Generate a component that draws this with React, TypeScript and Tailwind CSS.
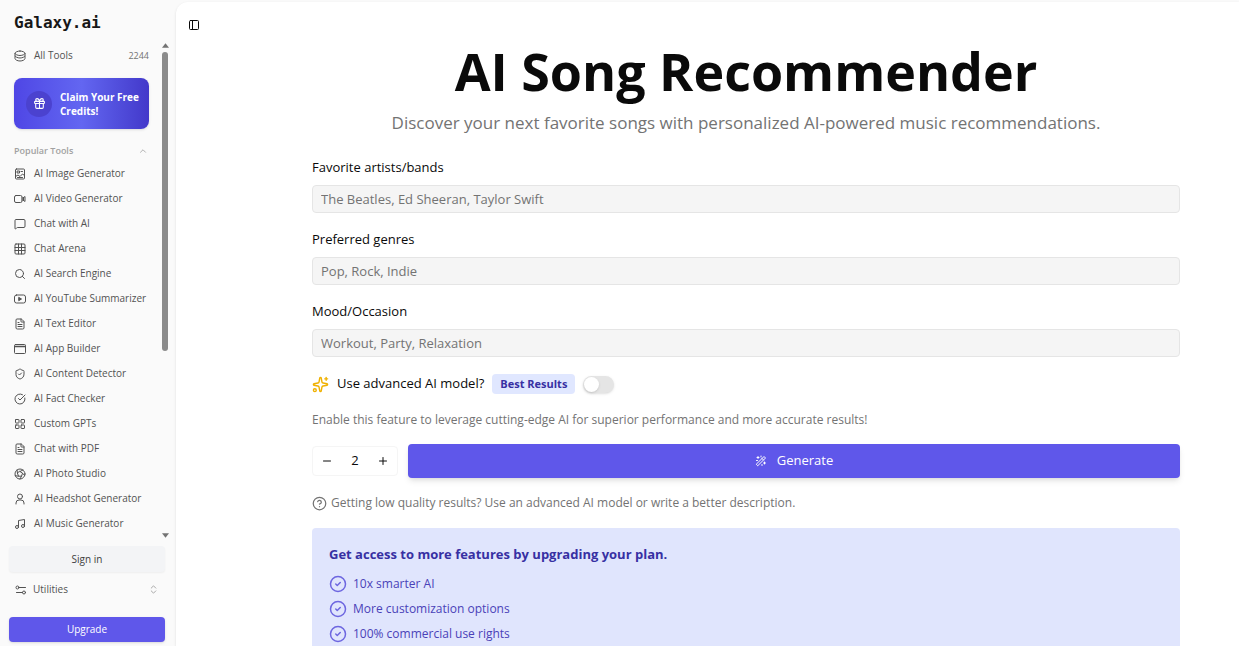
import { useState, type ReactNode } from "react";
import {
  ChevronsUpDown,
  ChevronUp,
  CircleCheckBig,
  CircleHelp,
  FileText,
  Gift,
  LayoutGrid,
  MessageSquare,
  Minus,
  Music,
  PanelLeft,
  Plus,
  Search,
  ShieldCheck,
  Sparkles,
  type LucideIcon,
} from "lucide-react";

function Svg({ size = 12, className, children }: { size?: number; className?: string; children: ReactNode }) {
  return (
    <svg
      width={size}
      height={size}
      viewBox="0 0 24 24"
      fill="none"
      stroke="currentColor"
      strokeWidth={2}
      strokeLinecap="round"
      strokeLinejoin="round"
      className={className}
      aria-hidden="true"
    >
      {children}
    </svg>
  );
}

function StackIcon() {
  return (
    <Svg>
      <path d="M12 2c5 0 10 2.500 10 4.500S17 11 12 11 2 8.500 2 6.500 7 2 12 2z" />
      <path d="M2 7v4c0 2.500 5 5 10 5s10-2.500 10-5V7" />
      <path d="M2 12v5c0 2.500 5 5 10 5s10-2.500 10-5v-5" />
    </Svg>
  );
}

function ImageIcon() {
  return (
    <Svg>
      <rect x="3" y="2" width="18" height="20" rx="2" />
      <rect x="7" y="6" width="4" height="4" />
      <path d="M14 7h3M3 17l5-3 4 3 5-5 4 3M7 19h10" />
    </Svg>
  );
}

function VideoIcon() {
  return (
    <Svg>
      <rect x="1" y="5" width="15" height="14" rx="3" />
      <path d="M16 10h2l4-3v10l-4-3h-2M19 9v6" />
    </Svg>
  );
}

function GridIcon() {
  return (
    <Svg>
      <rect x="2" y="2" width="20" height="20" rx="2" />
      <path d="M2 9h20M2 15h20M9 2v20M15 2v20" />
    </Svg>
  );
}

function PlayIcon() {
  return (
    <Svg>
      <rect x="1" y="4" width="22" height="16" rx="4" />
      <path d="m10 9 5 3-5 3z" fill="currentColor" />
    </Svg>
  );
}

function WindowIcon() {
  return (
    <Svg>
      <rect x="1" y="3" width="22" height="18" rx="2" />
      <path d="M1 7h22" strokeWidth={3} />
    </Svg>
  );
}

function ApertureIcon() {
  return (
    <Svg>
      <circle cx="12" cy="12" r="10" />
      <path d="m12 7 5 3.600-2 5.800H9l-2-5.800zM12 7l6-3M17 10.600l4.500 4.400M15 16.400 12 22M9 16.400l-6.500-1M7 10.600 6 4" />
    </Svg>
  );
}

function PersonIcon() {
  return (
    <Svg>
      <circle cx="12" cy="7" r="5" />
      <path d="M4 22v-2a6 6 0 0 1 6-6h4a6 6 0 0 1 6 6v2" />
    </Svg>
  );
}

function SlidersIcon() {
  return (
    <Svg>
      <circle cx="5" cy="7" r="3" />
      <path d="M8 7h13M3 17h12" />
      <circle cx="18" cy="17" r="3" />
    </Svg>
  );
}

function WandIcon() {
  return (
    <Svg>
      <path d="m3 18 15-15 3 3L6 21zM14 7l3 3M6 3v4M4 5h4M12 2v2M19 14v4M17 16h4M3 11h2M14 19v2" />
    </Svg>
  );
}

function CheckIcon() {
  return (
    <Svg size={18} className="text-[#6d66e0]">
      <circle cx="12" cy="12" r="10" />
      <path d="m9 12 2 2 4-4" />
    </Svg>
  );
}

const TOOLS: { label: string; icon: LucideIcon | (() => ReactNode) }[] = [
  { label: "AI Image Generator", icon: ImageIcon },
  { label: "AI Video Generator", icon: VideoIcon },
  { label: "Chat with AI", icon: MessageSquare },
  { label: "Chat Arena", icon: GridIcon },
  { label: "AI Search Engine", icon: Search },
  { label: "AI YouTube Summarizer", icon: PlayIcon },
  { label: "AI Text Editor", icon: FileText },
  { label: "AI App Builder", icon: WindowIcon },
  { label: "AI Content Detector", icon: ShieldCheck },
  { label: "AI Fact Checker", icon: CircleCheckBig },
  { label: "Custom GPTs", icon: LayoutGrid },
  { label: "Chat with PDF", icon: FileText },
  { label: "AI Photo Studio", icon: ApertureIcon },
  { label: "AI Headshot Generator", icon: PersonIcon },
  { label: "AI Music Generator", icon: Music },
];

const FIELDS = [
  { id: "artists", label: "Favorite artists/bands", placeholder: "The Beatles, Ed Sheeran, Taylor Swift" },
  { id: "genres", label: "Preferred genres", placeholder: "Pop, Rock, Indie" },
  { id: "mood", label: "Mood/Occasion", placeholder: "Workout, Party, Relaxation" },
];

const PERKS = ["10x smarter AI", "More customization options", "100% commercial use rights"];

function ScrollTrack() {
  return (
    <div className="flex w-2 flex-col items-center justify-between" aria-hidden="true">
      <div className="flex w-full flex-1 flex-col items-center gap-1">
        <svg width="7" height="5" viewBox="0 0 8 5" className="fill-neutral-500">
          <path d="M4 0 8 5H0z" />
        </svg>
        <div className="h-[61%] w-1.5 rounded-full bg-[#8b8b8b]" />
      </div>
      <svg width="7" height="5" viewBox="0 0 8 5" className="fill-neutral-500">
        <path d="M0 0h8L4 5z" />
      </svg>
    </div>
  );
}

function Sidebar() {
  return (
    <aside className="flex w-44 shrink-0 flex-col text-[10px] text-neutral-600">
      <a href="#" className="px-3.5 pt-[13px] font-['DejaVu_Sans_Mono',monospace] text-base leading-5 font-bold text-neutral-900">
        Galaxy.ai
      </a>
      <div className="mt-2.5 flex min-h-0 flex-1 pr-[7px]">
        <nav className="min-w-0 flex-1 overflow-hidden pl-3.5">
          <a href="#all" className="mr-3 flex h-[25px] items-center gap-2">
            <StackIcon />
            All Tools
            <span className="ml-auto text-[9px] text-neutral-500">2244</span>
          </a>
          <button className="mt-2.5 mr-3 flex h-[51px] w-[135px] items-center gap-2 rounded-lg bg-linear-to-r from-[#4f46e5] via-[#6366f1] to-[#4338ca] px-3 text-left text-[10px] leading-3.5 font-bold text-white shadow">
            <span className="flex size-[26px] shrink-0 items-center justify-center rounded-full bg-[#4b42cf]">
              <Gift size={13} />
            </span>
            <span className="whitespace-nowrap">
              Claim Your Free
              <br />
              Credits!
            </span>
          </button>
          <button className="mt-3.5 mr-3 flex h-4 w-[134px] items-center justify-between text-[9px] font-semibold text-neutral-400">
            Popular Tools
            <ChevronUp size={10} />
          </button>
          <ul className="mt-0.5">
            {TOOLS.map(({ label, icon: Icon }) => (
              <li key={label}>
                <a href="#tool" className="flex h-[25px] items-center gap-2 whitespace-nowrap">
                  <Icon size={12} />
                  {label}
                </a>
              </li>
            ))}
          </ul>
        </nav>
        <ScrollTrack />
      </div>
      <div className="flex flex-col pt-2 pr-[11px] pb-1 pl-[9px]">
        <button className="h-[26px] rounded bg-gray-100 text-neutral-700 shadow-xs">Sign in</button>
        <button className="mt-1 flex h-[27px] items-center gap-1.5 px-1.5">
          <SlidersIcon />
          Utilities
          <ChevronsUpDown size={11} className="ml-auto text-neutral-400" />
        </button>
        <button className="mt-3.5 h-[25px] rounded bg-[#5f57ea] text-white shadow">Upgrade</button>
      </div>
    </aside>
  );
}

export default function App() {
  const [count, setCount] = useState(2);

  return (
    <div className="flex h-screen overflow-hidden bg-neutral-50 font-['Open_Sans',sans-serif]">
      <Sidebar />
      <main className="mt-0.5 min-w-0 flex-1 overflow-hidden rounded-tl-xl bg-white text-neutral-950 shadow-sm">
        <button aria-label="Toggle sidebar" className="mt-[17px] ml-3 block">
          <PanelLeft size={12} />
        </button>
        <div className="pt-2.5 pr-[59px] pl-[136px]">
          <h1 className="text-center text-[52px] leading-[60px] font-bold">AI Song Recommender</h1>
          <p className="mt-2 text-center text-[17px] leading-7 text-neutral-500">
            Discover your next favorite songs with personalized AI-powered music recommendations.
          </p>
          <form className="mt-5" onSubmit={(e) => e.preventDefault()}>
            <div className="flex flex-col gap-4">
              {FIELDS.map((f) => (
                <div key={f.id} className="flex flex-col gap-2">
                  <label htmlFor={f.id} className="text-[13px] leading-5">
                    {f.label}
                  </label>
                  <input
                    id={f.id}
                    placeholder={f.placeholder}
                    className="h-7 rounded border border-neutral-200 bg-neutral-100 px-2 text-[13px] placeholder:text-neutral-500"
                  />
                </div>
              ))}
            </div>
            <div className="mt-4 flex h-[22px] items-center gap-2 text-[13px]">
              <Sparkles size={17} className="text-yellow-500" />
              <label htmlFor="advanced">Use advanced AI model?</label>
              <span className="rounded bg-indigo-100 px-2 text-[11px] leading-5 font-bold text-[#3730a3]">Best Results</span>
              <input
                id="advanced"
                type="checkbox"
                role="switch"
                className="h-[17px] w-[31px] appearance-none rounded-full bg-neutral-200 shadow-sm before:m-px before:block before:size-[15px] before:rounded-full before:bg-white before:shadow checked:bg-indigo-500 checked:before:ml-[15px]"
              />
            </div>
            <p className="mt-[15px] text-[12px] leading-5 text-neutral-500">
              Enable this feature to leverage cutting-edge AI for superior performance and more accurate results!
            </p>
            <div className="mt-3.5 flex items-center gap-2.5">
              <div className="flex h-[30px] w-[86px] shrink-0 items-center justify-between rounded border border-neutral-100 px-2 text-[13px]">
                <button type="button" aria-label="Fewer" onClick={() => setCount(Math.max(1, count - 1))}>
                  <Minus size={12} />
                </button>
                {count}
                <button type="button" aria-label="More" onClick={() => setCount(count + 1)}>
                  <Plus size={12} />
                </button>
              </div>
              <button className="flex h-[34px] flex-1 items-center justify-center gap-2.5 rounded bg-[#5f57ea] text-[13px] text-white shadow-md">
                <WandIcon />
                Generate
              </button>
            </div>
          </form>
          <p className="mt-[15px] flex items-center gap-1 text-[12px] leading-5 text-neutral-500">
            <CircleHelp size={15} />
            Getting low quality results? Use an advanced AI model or write a better description.
          </p>
          <section className="mt-[15px] rounded bg-[#e0e5fd] px-[17px] py-4">
            <h2 className="text-[13px] leading-5 font-bold text-[#3730a3]">
              Get access to more features by upgrading your plan.
            </h2>
            <ul className="mt-[7px] text-[12px] text-[#4a42b8]">
              {PERKS.map((perk) => (
                <li key={perk} className="flex h-[25px] items-center gap-1.5">
                  <CheckIcon />
                  {perk}
                </li>
              ))}
            </ul>
          </section>
        </div>
      </main>
    </div>
  );
}
